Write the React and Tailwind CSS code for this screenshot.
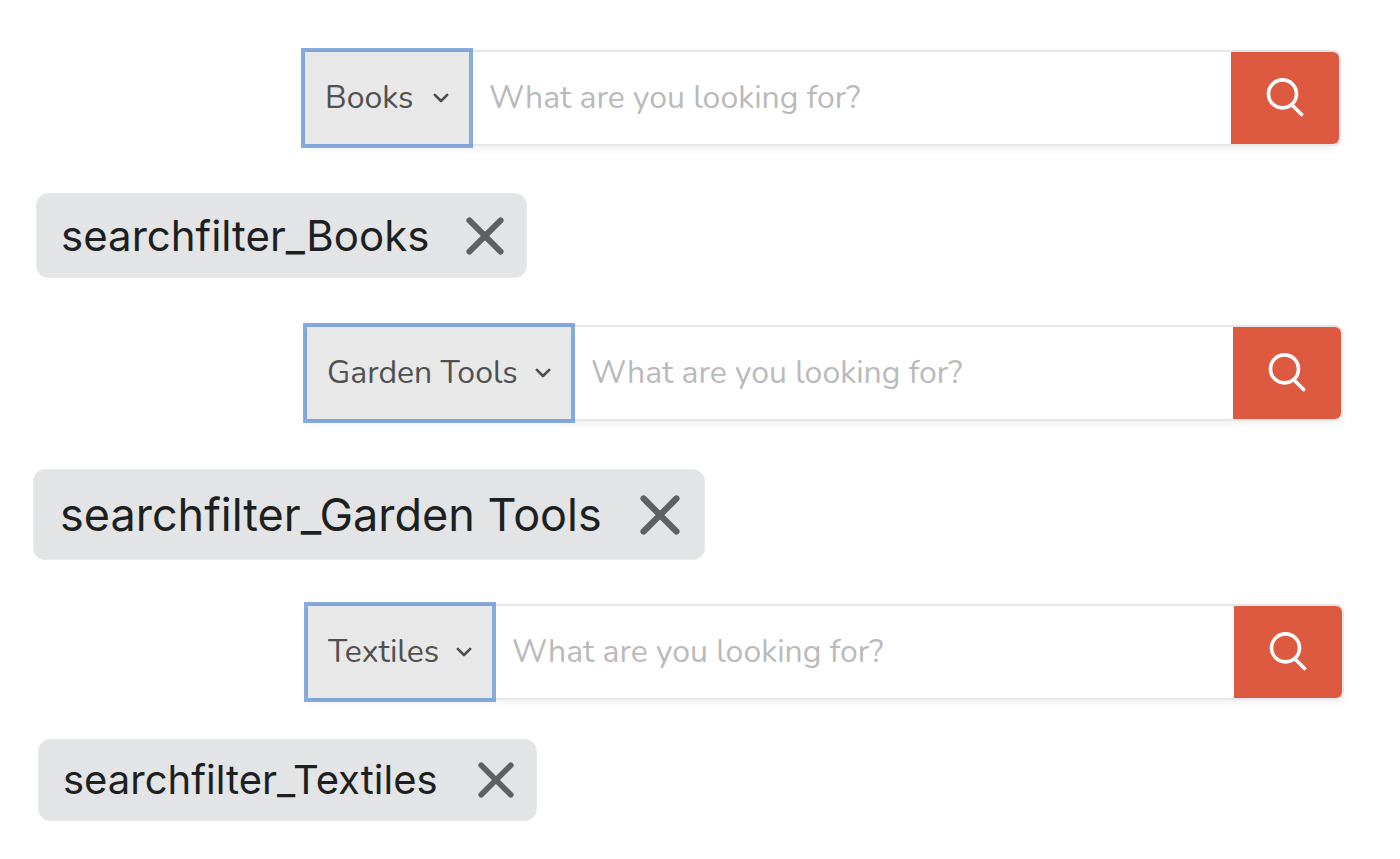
const categories = ["Books", "Garden Tools", "Textiles"];

const rows = [
  {
    category: "Books",
    row: "pl-[303px] pr-[59px]",
    select: "w-[164px]",
    chipRow: "pl-9 pt-[47px] pb-[47px]",
    chip: "h-[85px] w-[491px] pl-6 pr-[22px] text-[42px]",
    icon: "size-[38px]",
  },
  {
    category: "Garden Tools",
    row: "pl-[305px] pr-[57px]",
    select: "w-[264px]",
    chipRow: "pl-[33px] pt-12 pb-11",
    chip: "h-[91px] w-[672px] pl-[26px] pr-6 text-[45px]",
    icon: "size-10",
  },
  {
    category: "Textiles",
    row: "pl-[306px] pr-[56px]",
    select: "w-[184px]",
    chipRow: "pl-[38px] pt-[39px] pb-[38px]",
    chip: "h-[82px] w-[499px] pl-6 pr-[22px] text-[40px]",
    icon: "size-9",
  },
];

function ChevronIcon() {
  return (
    <svg
      className="pointer-events-none absolute right-5 top-[41px] h-[10px] w-4"
      viewBox="0 0 16 10"
      fill="none"
      stroke="#4d4d4d"
      strokeWidth="2.6"
      strokeLinecap="round"
      strokeLinejoin="round"
      aria-hidden="true"
    >
      <path d="M1.8 1.8 8 8 14.2 1.8" />
    </svg>
  );
}

function SearchIcon() {
  return (
    <svg
      className="size-10"
      viewBox="0 0 40 40"
      fill="none"
      stroke="white"
      strokeWidth="3.6"
      strokeLinecap="round"
      aria-hidden="true"
    >
      <circle cx="17.5" cy="15.9" r="14" />
      <path d="M27.3 27.2 36.6 36.5" />
    </svg>
  );
}

function SearchBar({ category, row, select }) {
  return (
    <div className={row}>
      <form
        role="search"
        onSubmit={(event) => event.preventDefault()}
        className="flex h-24 rounded-lg border-2 border-[#e7e7e7] bg-white font-['Nunito','Open_Sans',sans-serif] text-[32px] shadow-[0_4px_8px_rgba(0,0,0,0.05)]"
      >
        <div className={`relative shrink-0 bg-[#e8e8e8] ring-4 ring-[#5588d0]/70 ${select}`}>
          <select
            aria-label="Category"
            defaultValue={category}
            className="h-full w-full appearance-none bg-transparent pl-5 pr-10 font-normal text-[#505050] outline-none"
          >
            {categories.map((name) => (
              <option key={name}>{name}</option>
            ))}
          </select>
          <ChevronIcon />
        </div>
        <input
          type="search"
          aria-label="Search"
          placeholder="What are you looking for?"
          className="min-w-0 flex-1 bg-transparent px-5 font-normal text-[#4d4d4d] outline-none placeholder:text-[#bababa]"
        />
        <button
          type="submit"
          aria-label="Search"
          className="flex w-[108px] shrink-0 items-center justify-center rounded-r-md bg-[#dd5a41]"
        >
          <SearchIcon />
        </button>
      </form>
    </div>
  );
}

function FilterChip({ category, chipRow, chip, icon }) {
  return (
    <div className={`flex ${chipRow}`}>
      <div
        className={`flex items-center justify-between rounded-xl border border-[#e9eaeb] bg-[#e3e4e6] font-['Inter',sans-serif] leading-none text-[#1d1f21] ${chip}`}
      >
        <span className="whitespace-nowrap">searchfilter_{category}</span>
        <button type="button" aria-label={`Remove ${category} filter`}>
          <svg
            className={icon}
            viewBox="0 0 38 38"
            fill="none"
            stroke="#5f6064"
            strokeWidth="6"
            strokeLinecap="round"
            aria-hidden="true"
          >
            <path d="M3.4 3.4 34.6 34.6M34.6 3.4 3.4 34.6" />
          </svg>
        </button>
      </div>
    </div>
  );
}

export default function App() {
  return (
    <main className="bg-white pt-[50px]">
      {rows.map((item) => (
        <section key={item.category}>
          <SearchBar {...item} />
          <FilterChip {...item} />
        </section>
      ))}
    </main>
  );
}
